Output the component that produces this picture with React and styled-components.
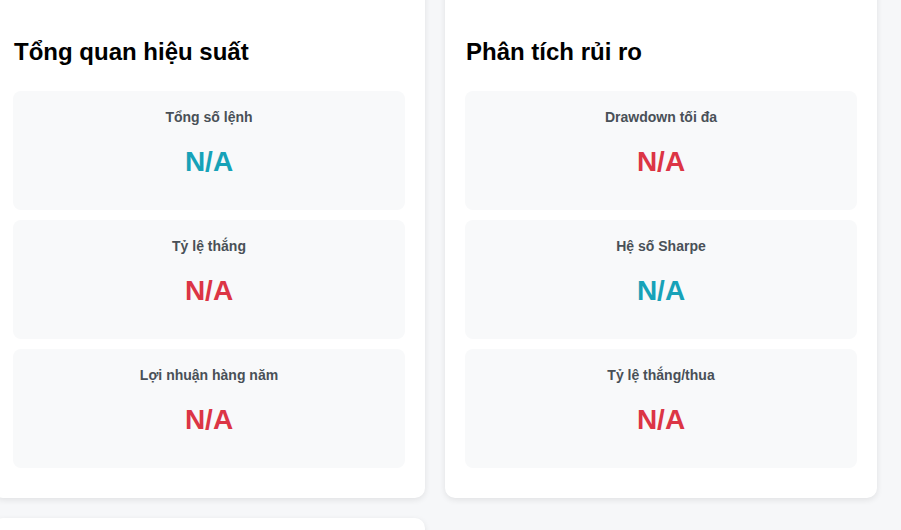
import styled, { createGlobalStyle } from "styled-components";

const GlobalStyle = createGlobalStyle`
    body {
        margin: 0;
        background: #f6f7f9;
        font-family: "Liberation Sans", Arial, sans-serif;
        overflow: hidden;
    }
`;

const COLORS = {
    info: "#17a2b8",
    danger: "#dc3545",
};

const sections = [
    {
        title: "Tổng quan hiệu suất",
        metrics: [
            { label: "Tổng số lệnh", value: "N/A", tone: "info" },
            { label: "Tỷ lệ thắng", value: "N/A", tone: "danger" },
            { label: "Lợi nhuận hàng năm", value: "N/A", tone: "danger" },
        ],
    },
    {
        title: "Phân tích rủi ro",
        metrics: [
            { label: "Drawdown tối đa", value: "N/A", tone: "danger" },
            { label: "Hệ số Sharpe", value: "N/A", tone: "info" },
            { label: "Tỷ lệ thắng/thua", value: "N/A", tone: "danger" },
        ],
    },
];

function MetricBox({ label, value, tone })
{
    return (
        <Metric>
            <MetricLabel>{label}</MetricLabel>
            <MetricValue $tone={tone}>{value}</MetricValue>
        </Metric>
    );
}

export default function App()
{
    return (
        <>
            <GlobalStyle />
            <Grid>
                {sections.map(section => (
                    <Card key={section.title}>
                        <CardTitle>{section.title}</CardTitle>
                        {section.metrics.map(m => (
                            <MetricBox key={m.label} {...m} />
                        ))}
                    </Card>
                ))}
                <Card $short />
            </Grid>
        </>
    );
}

const Grid = styled.div`
    display: grid;
    grid-template-columns: 432px 432px;
    gap: 20px;
    margin: -20px 0 0 -7px;
`;

const Card = styled.div`
    background: #fff;
    border-radius: 10px;
    box-shadow: 0 2px 6px rgba(0, 0, 0, 0.09);
    padding: 20px;
    min-height: ${p => (p.$short ? "200px" : "auto")};
`;

const CardTitle = styled.h2`
    margin: 38px 0 24px 1px;
    font-size: 24px;
    line-height: 1.2;
    font-weight: 700;
    color: #000;
`;

const Metric = styled.div`
    background: #f8f9fa;
    border-radius: 8px;
    height: 119px;
    box-sizing: border-box;
    padding: 16px 15px 15px;
    margin-bottom: 10px;
    text-align: center;
`;

const MetricLabel = styled.div`
    font-size: 14px;
    line-height: 21px;
    font-weight: 700;
    color: #495057;
`;

const MetricValue = styled.div`
    margin-top: 17px;
    font-size: 28px;
    line-height: 1.2;
    font-weight: 700;
    color: ${p => COLORS[p.$tone]};
`;
